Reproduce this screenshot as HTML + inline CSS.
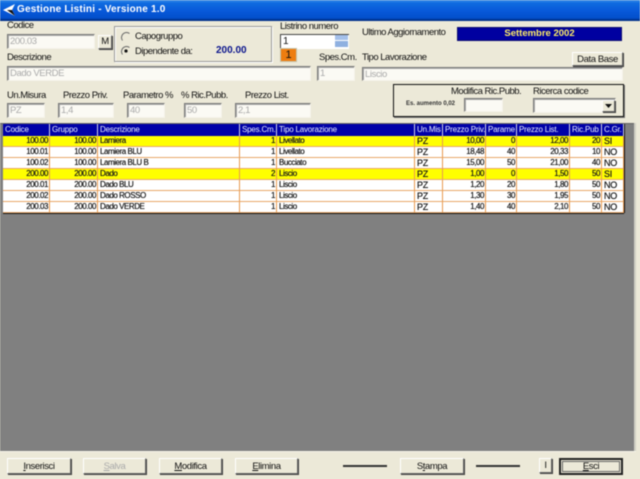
<!DOCTYPE html>
<html><head><meta charset="utf-8"><style>
html,body{margin:0;padding:0;width:640px;height:479px;overflow:hidden;background:#ece9d8}
body{position:relative;font-family:"Liberation Sans",sans-serif;font-size:10px;color:#111}
#w{position:absolute;left:0;top:0;width:640px;height:479px;filter:blur(.4px)}
#w>*{position:absolute;box-sizing:border-box}
.l{white-space:nowrap;line-height:12px;font-size:9.5px;letter-spacing:-.5px}
.i{background:#fbfaf4;border-top:1px solid #777;border-left:1px solid #777;border-bottom:1px solid #f4f2e8;border-right:1px solid #f4f2e8;color:#aaa;font-size:9.5px;letter-spacing:-.4px;line-height:13px;padding-left:2px;box-shadow:inset 1px 1px 0 #aaa}
.b{background:#ece9d8;border:1px solid;border-color:#fff #666 #666 #fff;box-shadow:1px 1px 0 #444;text-align:center;line-height:15px;font-size:9.5px;letter-spacing:-.4px;color:#111}
.t{left:3px;top:124px;width:621px;box-shadow:0 1px 0 #111,1px 0 0 #111;background:#fff;border-collapse:separate;border-spacing:0;table-layout:fixed}
.t td,.t th{box-sizing:border-box;white-space:nowrap;overflow:hidden;font-size:8px;font-weight:normal;text-align:left;color:#111;padding:0 1px 0 2px;height:11px;line-height:10px;letter-spacing:-.45px;border-right:1px solid #e89a50;border-bottom:1px solid #e8a868;text-shadow:0 0 .4px #333}
.t th{color:#e8eeff;background:#0000a8;border-right:1px solid #cfd2e8;border-bottom:0;height:12px;line-height:12px;letter-spacing:-.2px;text-shadow:none}
.t td:nth-child(1),.t td:nth-child(2),.t td:nth-child(4),.t td:nth-child(7),.t td:nth-child(8),.t td:nth-child(9),.t td:nth-child(10){text-align:right}
.t td:nth-child(6),.t td:nth-child(11){font-size:9px;letter-spacing:-.2px}
.y td{background:#ffff00}
u{text-decoration:underline}
</style></head><body><div id="w">
<div style="left:0;top:0;width:640px;height:21px;background:linear-gradient(#3c8ee8 0,#0f6be0 3px,#0757d8 12px,#0350cc 18px,#00308a 20px)"></div>
<svg style="left:3px;top:3px" width="13" height="14"><path d="M0 7 L12 1 L9 7 L12 13 Z" fill="#fff"/><path d="M4 7 L12 13 L9 7Z" fill="#111"/></svg>
<div class="l" style="left:17px;top:4px;color:#fff;font-weight:bold;font-size:10px;letter-spacing:.2px">Gestione Listini - Versione 1.0</div>

<div class="l" style="left:7px;top:20px">Codice</div>
<div class="i" style="left:7px;top:34px;width:88px;height:15px">200.03</div>
<div class="b" style="left:98px;top:35px;width:14px;height:14px;line-height:12px">M</div>
<div style="left:114px;top:26px;width:158px;height:36px;border:1px solid #999;box-shadow:inset 1px 1px 0 #fff,1px 1px 0 #fff"></div>
<svg style="left:120px;top:31px" width="12" height="26"><path d="M2.5 9.5A5 5 0 0 1 9.5 2.5" fill="none" stroke="#666"/><path d="M2.5 23.5A5 5 0 0 1 9.5 16.5" fill="none" stroke="#666"/><circle cx="6" cy="20" r="1.6" fill="#111"/></svg>
<div class="l" style="left:135px;top:31px">Capogruppo</div>
<div class="l" style="left:135px;top:46px">Dipendente da:</div>
<div class="l" style="left:216px;top:45px;color:#0a148c;font-weight:bold;font-size:10px;letter-spacing:0">200.00</div>

<div class="l" style="left:280px;top:21px">Listrino numero</div>
<div style="left:280px;top:34px;width:69px;height:15px;background:#fff;border-top:1px solid #444;border-left:1px solid #444;font-size:10px;line-height:13px;padding-left:2px">1</div>
<div style="left:335px;top:35px;width:13px;height:5px;background:#a4c0ea"></div>
<div style="left:335px;top:41px;width:13px;height:6px;background:#8fb0e0"></div>
<div style="left:280px;top:48px;width:17px;height:14px;background:#ee7d10;border:1px solid #c4c0a8;text-align:center;line-height:12px;font-size:11px;color:#111">1</div>

<div class="l" style="left:362px;top:27px">Ultimo Aggiornamento</div>
<div style="left:457px;top:27px;width:165px;height:14px;background:#0000a0;box-shadow:inset 0 0 0 1px #0a0a70;color:#ffee66;font-weight:bold;text-align:center;font-size:9.5px;line-height:14px">Settembre 2002</div>

<div class="l" style="left:7px;top:52px">Descrizione</div>
<div class="i" style="left:7px;top:66px;width:304px;height:15px">Dado VERDE</div>
<div class="l" style="left:319px;top:52px">Spes.Cm.</div>
<div class="i" style="left:317px;top:66px;width:38px;height:15px">1</div>
<div class="l" style="left:362px;top:52px">Tipo Lavorazione</div>
<div class="b" style="left:572px;top:52px;width:51px;height:14px;line-height:13px">Data Base</div>
<div class="i" style="left:362px;top:67px;width:261px;height:14px">Liscio</div>

<div class="l" style="left:7px;top:90px">Un.Misura</div>
<div class="l" style="left:63px;top:90px">Prezzo Priv.</div>
<div class="l" style="left:123px;top:90px">Parametro %</div>
<div class="l" style="left:181px;top:90px">% Ric.Pubb.</div>
<div class="l" style="left:245px;top:90px">Prezzo List.</div>
<div class="i" style="left:7px;top:103px;width:38px;height:15px">PZ</div>
<div class="i" style="left:58px;top:103px;width:56px;height:15px">1,4</div>
<div class="i" style="left:127px;top:103px;width:38px;height:15px">40</div>
<div class="i" style="left:184px;top:103px;width:38px;height:15px">50</div>
<div class="i" style="left:235px;top:103px;width:76px;height:15px">2,1</div>

<div style="left:393px;top:84px;width:231px;height:33px;border:1px solid #111;box-shadow:1px 1px 0 #777"></div>
<div class="l" style="left:451px;top:86px">Modifica Ric.Pubb.</div>
<div class="l" style="left:533px;top:86px">Ricerca codice</div>
<div class="l" style="left:406px;top:98px;font-size:6px;font-weight:bold;color:#333;letter-spacing:0">Es. aumento 0,02</div>
<div class="i" style="left:464px;top:98px;width:39px;height:14px"></div>
<div class="i" style="left:533px;top:98px;width:83px;height:15px"></div>
<div class="b" style="left:602px;top:100px;width:13px;height:12px"></div>
<svg style="left:604px;top:103px" width="9" height="6"><path d="M1 1H8L4.5 5Z" fill="#111"/></svg>

<div style="left:0;top:123px;width:634px;height:328px;background:#808080;border-top:1px solid #666"></div>
<div style="left:634px;top:123px;width:2px;height:328px;background:#d0cfc4"></div>
<div style="left:0;top:451px;width:636px;height:1px;background:#f6f4ea"></div>
<table class="t"><colgroup><col style="width:47px"><col style="width:48px"><col style="width:142px"><col style="width:37px"><col style="width:138px"><col style="width:28px"><col style="width:43px"><col style="width:31px"><col style="width:53px"><col style="width:32px"><col style="width:22px"></colgroup>
<tr><th>Codice</th><th>Gruppo</th><th>Descrizione</th><th>Spes.Cm.</th><th>Tipo Lavorazione</th><th>Un.Mis</th><th>Prezzo Priv.</th><th>Parame</th><th>Prezzo List.</th><th>Ric.Pub</th><th>C.Gr.</th></tr>
<tr class="y"><td>100.00</td><td>100.00</td><td>Lamiera</td><td>1</td><td>Livellato</td><td>PZ</td><td>10,00</td><td>0</td><td>12,00</td><td>20</td><td>SI</td></tr>
<tr><td>100.01</td><td>100.00</td><td>Lamiera BLU</td><td>1</td><td>Livellato</td><td>PZ</td><td>18,48</td><td>40</td><td>20,33</td><td>10</td><td>NO</td></tr>
<tr><td>100.02</td><td>100.00</td><td>Lamiera BLU B</td><td>1</td><td>Bucciato</td><td>PZ</td><td>15,00</td><td>50</td><td>21,00</td><td>40</td><td>NO</td></tr>
<tr class="y"><td>200.00</td><td>200.00</td><td>Dado</td><td>2</td><td>Liscio</td><td>PZ</td><td>1,00</td><td>0</td><td>1,50</td><td>50</td><td>SI</td></tr>
<tr><td>200.01</td><td>200.00</td><td>Dado BLU</td><td>1</td><td>Liscio</td><td>PZ</td><td>1,20</td><td>20</td><td>1,80</td><td>50</td><td>NO</td></tr>
<tr><td>200.02</td><td>200.00</td><td>Dado ROSSO</td><td>1</td><td>Liscio</td><td>PZ</td><td>1,30</td><td>30</td><td>1,95</td><td>50</td><td>NO</td></tr>
<tr><td>200.03</td><td>200.00</td><td>Dado VERDE</td><td>1</td><td>Liscio</td><td>PZ</td><td>1,40</td><td>40</td><td>2,10</td><td>50</td><td>NO</td></tr>
</table>

<div class="b" style="left:7px;top:458px;width:64px;height:16px"><u>I</u>nserisci</div>
<div class="b" style="left:83px;top:458px;width:63px;height:16px;color:#aaa"><u>S</u>alva</div>
<div class="b" style="left:159px;top:458px;width:63px;height:16px"><u>M</u>odifica</div>
<div class="b" style="left:235px;top:458px;width:63px;height:16px"><u>E</u>limina</div>
<div style="left:343px;top:465px;width:44px;height:2px;background:#333"></div>
<div class="b" style="left:400px;top:458px;width:64px;height:16px">S<u>t</u>ampa</div>
<div style="left:476px;top:465px;width:44px;height:2px;background:#333"></div>
<div class="b" style="left:539px;top:458px;width:13px;height:15px;line-height:13px">I</div>
<div style="left:559px;top:458px;width:64px;height:17px;border:2px solid #222;background:#ece9d8;text-align:center;line-height:13px;font-size:9.5px;letter-spacing:-.4px"><u>E</u>sci</div>
<div style="left:562px;top:461px;width:58px;height:11px;border:1px solid #666"></div>
</div></body></html>
